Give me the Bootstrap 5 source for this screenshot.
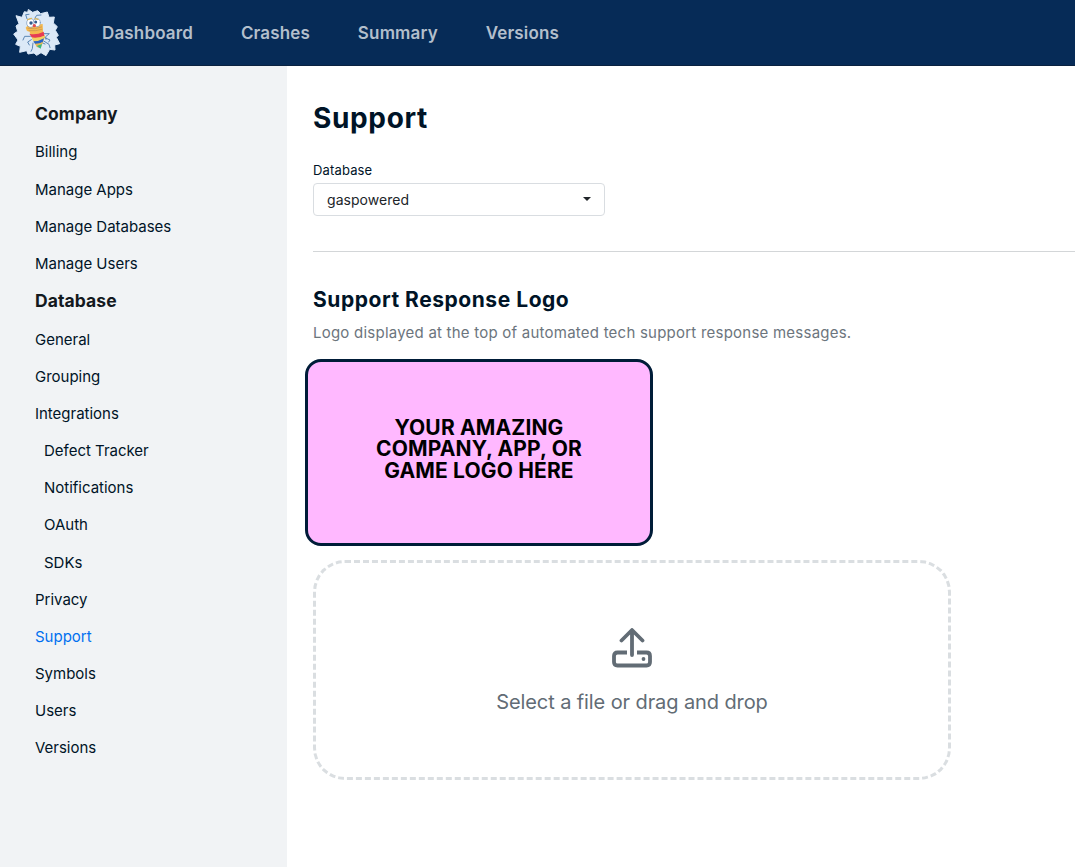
<!DOCTYPE html>
<html lang="en">
<head>
<meta charset="utf-8">
<meta name="viewport" content="width=device-width, initial-scale=1">
<title>Support</title>
<link href="https://cdn.jsdelivr.net/npm/bootstrap@5.3.0/dist/css/bootstrap.min.css" rel="stylesheet">
<style>
body{font-family:Inter,"Liberation Sans",sans-serif;color:#001427;height:867px;overflow:hidden}
.topbar{height:66px;background:#062b57;border-bottom:1px solid #0a2240}
.brand-bug{margin-left:10px;margin-right:22px}
.topbar .nav-link{color:#b3bfcc;font-size:17px;font-weight:600;line-height:24px;padding:0;margin-left:16px;margin-right:31.800px;letter-spacing:.16px}
.side{width:287px;background:#f1f3f5;padding:29px 0 0 35px}
.side .nav-link{padding:0;height:37.18px;line-height:37.18px;font-size:15px;letter-spacing:-.01px;color:#001427}
.side .nav-link.sub{padding-left:9px}
.side .nav-link.active{color:#0070f0}
.side h2{font-size:17.500px;font-weight:700;line-height:38.450px;letter-spacing:.08px;margin:0;color:#14191e}
.main{padding:34px 0 0 26px}
.page-title{font-size:28px;font-weight:700;line-height:36px;letter-spacing:.65px;margin:0 0 24px}
.db-label{font-size:13px;line-height:20px;letter-spacing:.15px;margin-bottom:3px}
.db-select{width:292px;height:33px;border:1px solid #d9dde1;border-radius:4px;font-size:14px;letter-spacing:.05px;padding:1px 13px;color:#212529}
.db-select::after{margin:0;border-top-width:4px;border-left-width:4px;border-right-width:4px;position:relative;top:-1px}
.rule{border-top:1px solid #d3d6d8;margin-top:35px}
.section-title{font-size:21px;font-weight:700;line-height:28px;letter-spacing:.54px;margin:34px 0 7px}
.section-note{font-size:15px;line-height:24px;letter-spacing:.23px;color:#6c757d;margin-bottom:14px}
.logo-card{width:348px;height:187px;margin-left:-8px;background:#ffb8ff;border:3px solid #001c38;border-radius:16px;color:#000;font-size:21px;line-height:21.400px;letter-spacing:.15px;font-weight:750;padding-bottom:7px}
.drop{width:638px;height:220px;margin-top:14px;border:3px dashed #dadee1;border-radius:32px;color:#626c75;font-size:20px;letter-spacing:-.1px;line-height:30px}
.drop svg{margin-top:65px}
.drop-text{margin-top:19px}
</style>
</head>
<body class="d-flex flex-column">
<header class="topbar d-flex align-items-center flex-shrink-0">
<svg class="brand-bug" width="54" height="54" viewBox="0 0 162 162" role="img" aria-label="Home" stroke-linecap="round" stroke-linejoin="round">
<path fill="#dce9f7" stroke="#dce9f7" stroke-width="3" d="M56 11L68 19 83 14 92 23 112 18 117 34 133 33 130 51 142 62 136 73 145 88 139 94 149 113 134 117 135 132 119 130 108 149 93 140 80 148 72 141 54 144 50 134 29 139 31 121 17 115 24 102 11 84 23 76 18 60 27 53 18 29 36 34 43 17 52 19Z"/>
<g fill="none" stroke="#5b86b4" stroke-width="3"><path d="M51 38L47 26 57 25M75 36L80 28 93 27M61 91L44 91 39 102M64 101L53 108 58 117M69 111L67 128 63 136M102 83L118 83 107 92 108 100M102 94L120 102 116 108M101 105L117 115 120 125M94 109L105 114"/></g>
<path fill="#f5b94f" d="M54 58L98 54 99 76 105 92 92 127 80 123 61 85 59 77 51 75 47 65Z"/>
<path fill="#e63b55" d="M58 83Q78 88 101 77L103 89Q83 98 65 94Z"/>
<path fill="#f3cf63" d="M65 95Q83 98 104 89L101 101Q86 108 70 105Z"/>
<path fill="#2865c7" d="M70 106Q88 106 102 97L98 109Q86 115 75 113Z"/>
<path fill="#e6bb58" d="M75 114Q88 114 98 108L95 116 81 120Z"/>
<path fill="#35ba87" d="M80 120L96 114 92 128Z"/>
<g fill="#fff" stroke="#6f93bb" stroke-width="2"><ellipse cx="62" cy="51" rx="12" ry="13"/><ellipse cx="80" cy="50" rx="11" ry="12"/></g>
<circle cx="63" cy="51" r="5" fill="#345b8c"/><circle cx="77" cy="48" r="4.500" fill="#345b8c"/>
<circle cx="73" cy="59" r="5" fill="#e04c4f"/>
<path d="M54 67Q75 72 95 63M57 74Q77 76 96 70" fill="none" stroke="#b08050" stroke-width="1.500"/>
<path d="M53 41L64 37M75 38L84 40" stroke="#deb759" stroke-width="4"/>
</svg>
<nav class="nav"><a class="nav-link" href="#">Dashboard</a><a class="nav-link" href="#">Crashes</a><a class="nav-link" href="#">Summary</a><a class="nav-link" href="#">Versions</a></nav>
</header>
<div class="d-flex flex-grow-1">
<aside class="side flex-shrink-0">
<nav class="nav flex-column flex-nowrap">
<h2>Company</h2>
<a class="nav-link" href="#">Billing</a><a class="nav-link" href="#">Manage Apps</a><a class="nav-link" href="#">Manage Databases</a><a class="nav-link" href="#">Manage Users</a>
<h2>Database</h2>
<a class="nav-link" href="#">General</a><a class="nav-link" href="#">Grouping</a><a class="nav-link" href="#">Integrations</a><a class="nav-link sub" href="#">Defect Tracker</a><a class="nav-link sub" href="#">Notifications</a><a class="nav-link sub" href="#">OAuth</a><a class="nav-link sub" href="#">SDKs</a><a class="nav-link" href="#">Privacy</a><a class="nav-link active" href="#">Support</a><a class="nav-link" href="#">Symbols</a><a class="nav-link" href="#">Users</a><a class="nav-link" href="#">Versions</a>
</nav>
</aside>
<main class="main flex-grow-1">
<h1 class="page-title">Support</h1>
<div class="db-label">Database</div>
<button class="db-select btn dropdown-toggle d-flex align-items-center justify-content-between" type="button" data-bs-toggle="dropdown">gaspowered</button>
<div class="rule"></div>
<h2 class="section-title">Support Response Logo</h2>
<p class="section-note">Logo displayed at the top of automated tech support response messages.</p>
<div class="logo-card d-flex align-items-center justify-content-center text-center"><div>YOUR AMAZING<br>COMPANY, APP, OR<br>GAME LOGO HERE</div></div>
<div class="drop d-flex flex-column align-items-center">
<svg width="40" height="40" viewBox="0 0 40 40" fill="none" stroke="#626c75" stroke-width="3.800" stroke-linecap="round" stroke-linejoin="round"><path d="M20 27V3M9.500 12.500L20 2 30.500 12.500"/><path stroke-linecap="butt" d="M15 24.500H5.500Q2 24.500 2 28V34Q2 37.500 5.500 37.500H34.500Q38 37.500 38 34V28Q38 24.500 34.500 24.500H25"/><circle cx="31.500" cy="31" r="1.900" fill="#626c75" stroke="none"/></svg>
<div class="drop-text">Select a file or drag and drop</div>
</div>
</main>
</div>
<script src="https://cdn.jsdelivr.net/npm/bootstrap@5.3.0/dist/js/bootstrap.bundle.min.js"></script>
</body>
</html>
